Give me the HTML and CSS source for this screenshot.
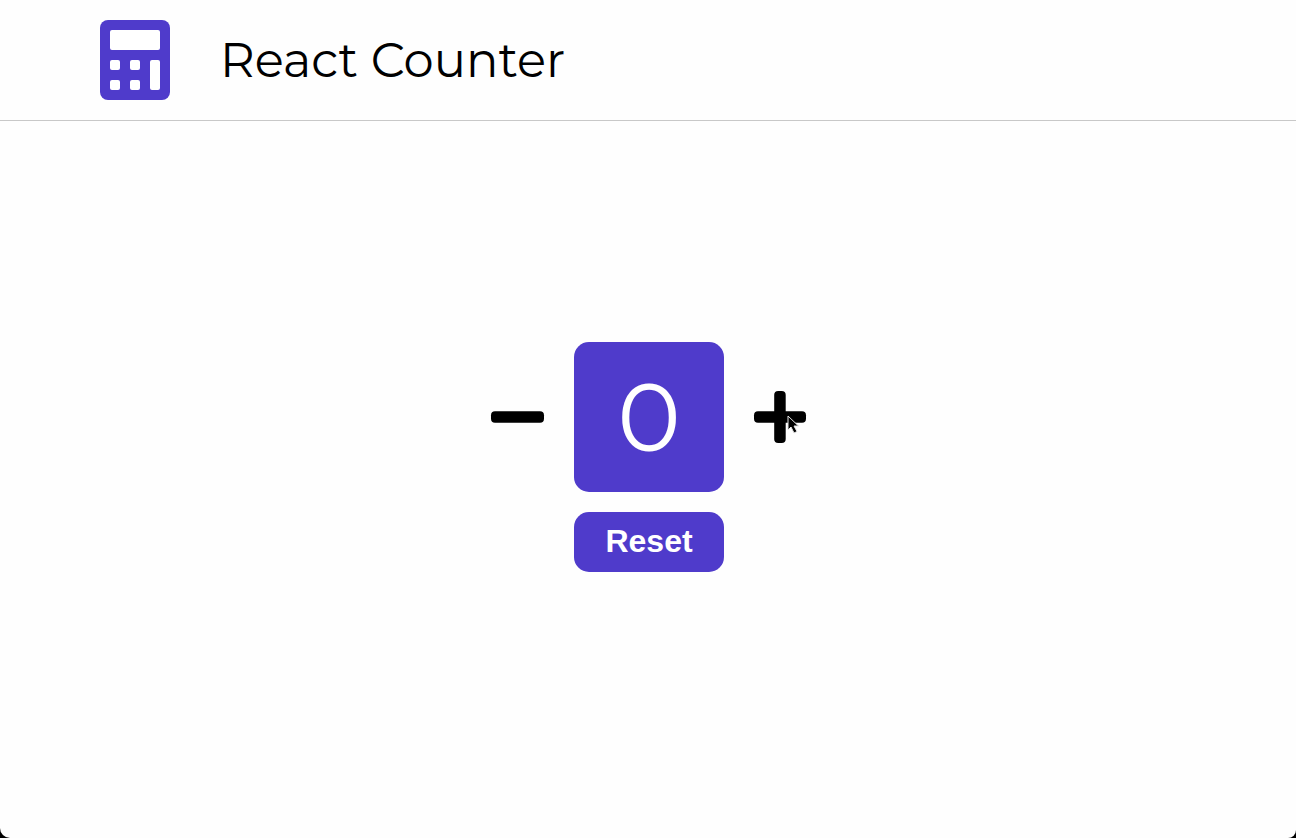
FILE: index.html
```html
<!DOCTYPE html>
<html lang="en">
<head>
<meta charset="utf-8">
<meta name="viewport" content="width=device-width, initial-scale=1">
<title>React Counter</title>
<link rel="stylesheet" href="styles.css">
</head>
<body>
<div class="page">
  <header class="header">
    <svg class="logo" viewBox="0 0 70 80" aria-hidden="true">
      <rect width="70" height="80" rx="8" fill="#4f3bcb"/>
      <g fill="#fff">
        <rect x="10" y="10" width="50" height="20" rx="2"/>
        <rect x="10" y="40" width="10" height="10" rx="2"/>
        <rect x="30" y="40" width="10" height="10" rx="2"/>
        <rect x="50" y="40" width="10" height="30" rx="2"/>
        <rect x="10" y="60" width="10" height="10" rx="2"/>
        <rect x="30" y="60" width="10" height="10" rx="2"/>
      </g>
    </svg>
    <h1 class="title">React Counter</h1>
  </header>
  <main class="main">
    <div class="counter">
      <button class="step" type="button" aria-label="Decrease">
        <svg class="icon" viewBox="0 0 52 52" aria-hidden="true"><rect x="-1" y="20.300" width="53" height="11.500" rx="4"/></svg>
      </button>
      <output class="value">0</output>
      <button class="step" type="button" aria-label="Increase">
        <svg class="icon" viewBox="0 0 52 52" aria-hidden="true"><rect y="20.300" width="52" height="11.500" rx="4"/><rect x="20.200" width="11.500" height="52" rx="4"/></svg>
        <svg class="cursor" viewBox="0 0 12 20" aria-hidden="true"><path d="M1 1v14l3-3 3 6 3-1.500-3-5.500h4.500z" fill="#000" stroke="#e4e4e4" stroke-width="1"/></svg>
      </button>
    </div>
    <button class="reset" type="button">Reset</button>
  </main>
</div>
</body>
</html>
```
FILE: styles.css
```css
html {
  background: #000;
}

body {
  margin: 0;
  font-family: Montserrat, Inter, sans-serif;
  color: #000;
}

.page {
  display: flex;
  flex-direction: column;
  min-height: 100vh;
  background: #fefefe;
  border-radius: 0 0 8px 10px;
}

.header {
  display: flex;
  align-items: center;
  gap: 50px;
  padding: 20px 100px;
  background: #fefefe;
  border-bottom: 1px solid #c8c8c8;
}

.logo {
  width: 70px;
  height: 80px;
}

.title {
  margin: 0;
  font-size: 48px;
  font-weight: 400;
  line-height: 60px;
}

.main {
  flex: 1;
  display: flex;
  flex-direction: column;
  align-items: center;
  justify-content: center;
  gap: 20px;
  padding: 0 0 45px 2px;
}

.counter {
  display: flex;
  align-items: center;
  gap: 30px;
}

.step {
  position: relative;
  padding: 0;
  border: 0;
  background: none;
}

.icon {
  display: block;
  width: 52px;
  height: 52px;
  overflow: visible;
}

.cursor {
  position: absolute;
  top: 24px;
  left: 33px;
  width: 12px;
  height: 20px;
}

.value {
  display: grid;
  place-items: center;
  width: 150px;
  height: 150px;
  border-radius: 15px;
  background: #4f3bcb;
  color: #fff;
  font-size: 96px;
  font-weight: 400;
  line-height: 1;
}

.reset {
  width: 150px;
  height: 60px;
  padding: 0 0 2px;
  border: 0;
  border-radius: 15px;
  background: #4f3bcb;
  color: #fff;
  font: bold 32px "Liberation Sans", Arial, sans-serif;
}
```
